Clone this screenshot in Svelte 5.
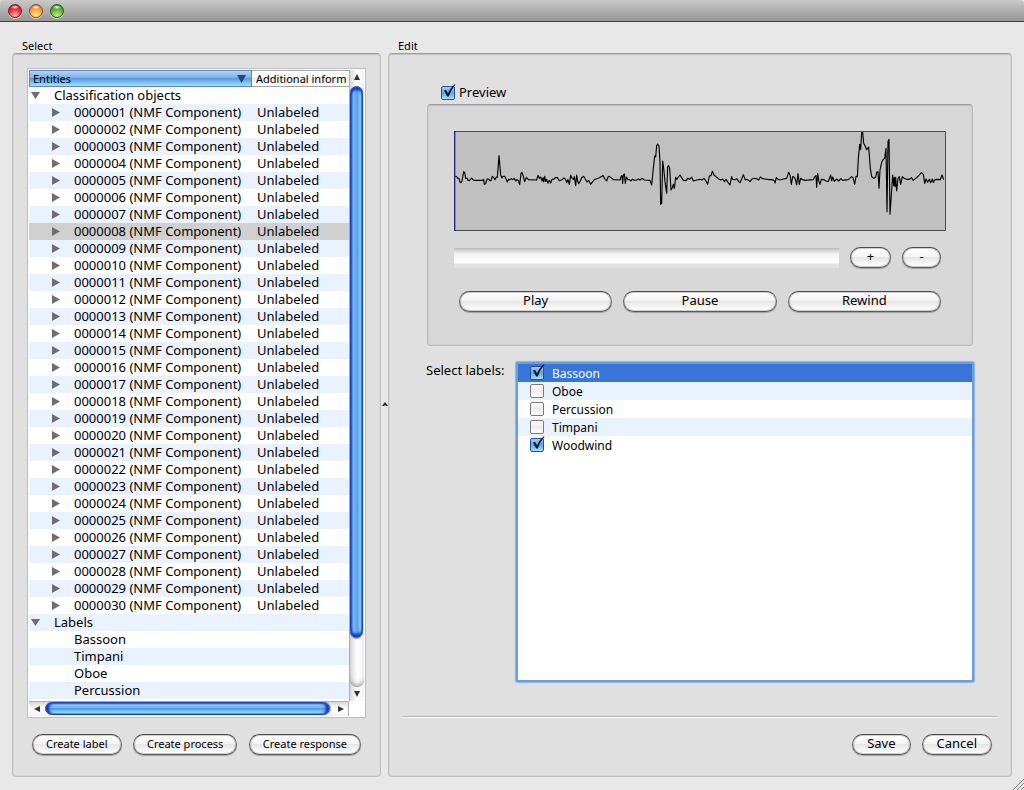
<script>
  const pad = (n) => String(n).padStart(7, '0');
  const rows = [
    { text: 'Classification objects', level: 0, open: true },
    ...Array.from({ length: 30 }, (_, i) => ({
      text: `${pad(i + 1)} (NMF Component)`,
      info: 'Unlabeled',
      level: 1,
      closed: true,
      selected: i === 7
    })),
    { text: 'Labels', level: 0, open: true },
    ...['Bassoon', 'Timpani', 'Oboe', 'Percussion'].map((text) => ({ text, level: 1 }))
  ];

  let preview = $state(true);
  let labels = $state([
    { name: 'Bassoon', on: true },
    { name: 'Oboe', on: false },
    { name: 'Percussion', on: false },
    { name: 'Timpani', on: false },
    { name: 'Woodwind', on: true }
  ]);

  // Waveform samples: each part is [x offset, y offset, "x,y ..."].
  const parts = [
    [-42, -18, '46,154 50,155 53,160 57,160 60,171 63,173 66,168 71,140 74,143 77,160 82,160 84,166 89,166 95,159 99,164 102,166 128,166 131,163 133,178 137,176 141,162 146,162 149,167 153,167 157,154 161,158 165,164 169,156 172,157 177,92 182,150 186,159 189,154 194,154 198,161 202,171 206,163 210,164 214,161 218,164 223,160 227,168 231,164 235,167 239,179 243,145 246,142 250,154 254,170 259,157 265,164 290,165 294,151 298,160 302,156 306,168 309,158 311,171 314,154 317,170 320,163 324,175 328,166 332,174 336,163 341,163 346,158 352,158 358,167 366,164 372,159 377,163 380,173 384,164 388,178 392,150 396,160 400,163 403,155 407,182 410,150 413,168 416,176 421,168 425,158 431,154 437,164 441,171 446,166 452,178 458,170 463,164 470,161 478,158 486,154 489,151 494,161 500,168 504,156 508,154'],
    [438, -18, '33,158 40,164 60,165 63,155 66,152 68,175 70,150 73,147 76,175 79,156 83,163 88,164 93,168 97,163 103,166 110,165 115,162 120,165 127,160 133,165 150,166 155,180 160,130 164,93 167,96 170,62 173,57 177,63 180,110 182,238 185,235 188,108 191,130 195,170 200,205 203,125 206,122 209,130 213,195 217,188 220,178 223,190 227,157 231,163 235,156 240,150 245,158 250,166 258,167 263,160 269,163 275,156 280,168 290,165 300,163 306,165 312,160 318,168 323,178 328,153 333,152 337,139 342,150 348,155 355,161 362,165 368,162 373,170 378,163 384,172 390,180 395,155 398,163 405,164 411,161 416,170 420,173 425,162 430,149 436,165 442,163 450,170 455,163 462,160 470,161 476,165 481,156 488,161 495,162 508,164'],
    [708, -93, '245,239 252,241 255,249 259,233 264,238'],
    [978, -18, '0,165 10,162 20,160 26,142 30,150 34,178 38,155 42,156 46,162 50,180 54,146 58,178 62,160 68,164 75,166 100,164 104,155 108,152 110,187 113,146 117,170 120,178 124,163 132,164 138,168 145,170 152,150 155,168 158,156 163,169 170,162 176,168 183,161 188,166 205,164 215,155 219,158 224,178 228,154 232,155 235,100 239,58 242,74 245,22 248,22 251,55 255,62 260,74 266,66 271,130 275,155 282,160 287,157 290,142 294,140 297,190 300,135 305,112 310,103 314,100 318,70 321,260 324,50 327,43 330,268 333,225 338,150 341,182 343,157 345,185 347,157 350,198 354,160 358,155 362,178 367,155 372,160 380,163 388,163 394,158 400,166 410,158 418,150 424,143 430,148 434,175 438,162 443,172 448,163 452,173 457,162 460,172 465,164 475,163 481,164 486,150 491,164']
  ];
  const wave = parts
    .flatMap(([dx, dy, pts]) =>
      pts.split(' ').map((p) => {
        const [x, y] = p.split(',').map(Number);
        return `${x + dx},${y + dy}`;
      })
    )
    .join(' ');
</script>

{#snippet tick()}
  <svg class="tick" viewBox="0 0 16 16" aria-hidden="true">
    <path d="M3 6.6 5 5.8 7 9.4 C8.6 5.6 10.8 2.6 13.8 0.2 L14.6 0.8 C11.8 3.8 9.4 8 7.8 12.4 L6.2 12.4Z" fill="#10131c" />
  </svg>
{/snippet}

{#snippet arrow(dir)}
  <svg class="arrow" viewBox="0 0 8 8" aria-hidden="true">
    <path
      d={{ up: 'M4 1 7 7H1Z', down: 'M4 7 7 1H1Z', left: 'M1 4 7 1V7Z', right: 'M7 4 1 1V7Z' }[dir]}
      fill="#333"
    />
  </svg>
{/snippet}

<div class="window">
  <header class="titlebar">
    <button class="light red" aria-label="Close"></button>
    <button class="light amber" aria-label="Minimize"></button>
    <button class="light green" aria-label="Zoom"></button>
  </header>

  <main>
    <section class="pane select">
      <h2>Select</h2>
      <div class="group">
        <div class="tree">
          <div class="view">
            <table>
              <colgroup><col class="c1" /><col /></colgroup>
              <thead>
                <tr>
                  <th class="sorted"><span>Entities</span>
                    <svg viewBox="0 0 9 8" aria-hidden="true"><path d="M0 0H9L4.5 8Z" fill="#1f4a73" /></svg>
                  </th>
                  <th class="plain">Additional inform</th>
                </tr>
              </thead>
              <tbody>
                {#each rows as r}
                  <tr class:selected={r.selected}>
                    <td class={`level${r.level}`}>
                      <span class="mark">
                        {#if r.open}
                          <svg viewBox="0 0 9 9" aria-hidden="true"><path d="M0 1H9L4.5 8Z" fill="#6e6e6e" /></svg>
                        {:else if r.closed}
                          <svg viewBox="0 0 9 9" aria-hidden="true"><path d="M1 0V9L9 4.5Z" fill="#6e6e6e" /></svg>
                        {/if}
                      </span>{r.text}
                    </td>
                    <td class="info">{r.info ?? ''}</td>
                  </tr>
                {/each}
              </tbody>
            </table>
          </div>
          <div class="vbar">
            <button aria-label="Scroll up">{@render arrow('up')}</button>
            <div class="vtrack"><div class="vthumb"></div></div>
            <button aria-label="Scroll down">{@render arrow('down')}</button>
          </div>
          <div class="hbar">
            <button aria-label="Scroll left">{@render arrow('left')}</button>
            <div class="htrack"><div class="hthumb"></div></div>
            <button aria-label="Scroll right">{@render arrow('right')}</button>
          </div>
        </div>
        <div class="actions">
          <button class="pill small">Create label</button>
          <button class="pill small">Create process</button>
          <button class="pill small">Create response</button>
        </div>
      </div>
    </section>

    <div class="splitter">
      <svg viewBox="0 0 6 4" aria-hidden="true"><path d="M0 4 3 0 6 4H4L3 3 2 4Z" fill="#222" /></svg>
    </div>

    <section class="pane edit">
      <h2>Edit</h2>
      <div class="group">
        <div class="content">
          <label class="check preview">
            <span class="box"><input type="checkbox" bind:checked={preview} />{#if preview}{@render tick()}{/if}</span>
            Preview
          </label>
          <div class="group inner">
            <svg class="wave" viewBox="0 0 1476 300" preserveAspectRatio="none" role="img" aria-label="Waveform">
              <rect width="1476" height="300" fill="#c0c0c0" />
              <polyline points={wave} fill="none" stroke="#000" stroke-width="3.4" stroke-linejoin="round" />
              <path d="M0 1.5H1474.5V298.5H0" fill="none" stroke="#4c4c4c" stroke-width="3" />
              <path d="M2 0V300" stroke="#22227a" stroke-width="4" />
            </svg>
            <div class="zoomrow">
              <div class="strip"></div>
              <button class="pill plus" aria-label="Zoom in">+</button>
              <button class="pill minus" aria-label="Zoom out">-</button>
            </div>
            <div class="transport">
              <button class="pill">Play</button>
              <button class="pill">Pause</button>
              <button class="pill">Rewind</button>
            </div>
          </div>
          <div class="labelrow">
            <span class="caption" id="labels-caption">Select labels:</span>
            <ul class="list" aria-labelledby="labels-caption">
              {#each labels as l, i}
                <li class:current={i === 0}>
                  <label class="check">
                    <span class="box"><input type="checkbox" bind:checked={l.on} />{#if l.on}{@render tick()}{/if}</span>
                    {l.name}
                  </label>
                </li>
              {/each}
            </ul>
          </div>
        </div>
        <hr />
        <div class="footer">
          <button class="pill">Save</button>
          <button class="pill">Cancel</button>
        </div>
      </div>
    </section>
  </main>
  <svg class="grip" viewBox="0 0 12 12" aria-hidden="true">
    <path d="M1 12 12 1M5 12 12 5M9 12 12 9" stroke="#777" stroke-width="1" />
    <path d="M2 12 12 2M6 12 12 6M10 12 12 10" stroke="#fff" stroke-width=".6" />
  </svg>
</div>

<style>
  :global(body) { margin: 0; background: #e8e8e8; }
  .window {
    position: relative;
    box-sizing: border-box;
    min-height: 100vh;
    display: flex;
    flex-direction: column;
    background: #e8e8e8;
    color: #000;
    font: 13px/17px "Lucida Grande", "Noto Sans", "Open Sans", sans-serif;
  }
  button, input { font: inherit; color: inherit; margin: 0; }
  button { box-sizing: border-box; padding: 0; border: 0; background: none; }

  .titlebar {
    box-sizing: border-box;
    height: 22px;
    display: flex;
    align-items: center;
    gap: 7px;
    padding-left: 8px;
    border-bottom: 1px solid #404040;
    border-radius: 4px 4px 0 0;
    background: linear-gradient(#c9c9c9, #969696);
  }
  .light {
    width: 14px;
    height: 14px;
    border-radius: 50%;
    border: 1px solid;
    box-shadow: 0 1px 0 #d4d4d4;
  }
  .red { border-color: #7d2020; background: radial-gradient(ellipse 4px 2px at 50% 18%, #fff, #fff0), radial-gradient(circle at 50% 90%, #ffb0b0, #e33338 55%, #a80f16); }
  .amber { border-color: #8a4a1c; background: radial-gradient(ellipse 4px 2px at 50% 18%, #fff, #fff0), radial-gradient(circle at 50% 90%, #ffee86, #f4a63c 55%, #b9601a); }
  .green { border-color: #245f1c; background: radial-gradient(ellipse 4px 2px at 50% 18%, #fff, #fff0), radial-gradient(circle at 50% 90%, #c6ec84, #63b03c 55%, #2b7420); }

  main {
    flex: 1;
    display: flex;
    padding: 16px 12px 13px;
  }
  .pane { display: flex; flex-direction: column; }
  .select { width: 369px; }
  .edit { flex: 1; min-width: 0; }
  h2 { margin: 0; padding-left: 10px; font-size: 11px; line-height: 15px; font-weight: 400; }
  .group {
    flex: 1;
    box-sizing: border-box;
    display: flex;
    flex-direction: column;
    border: 1px solid #c0c0c0;
    border-top-color: #9e9e9e;
    border-radius: 4px;
    background: #e0e0e0;
    box-shadow: inset 0 1px 1px #0000001c, inset 0 0 0 1px #00000008;
  }
  .select .group { padding: 14px 14px 21px; }

  .tree {
    flex: 1;
    box-sizing: border-box;
    display: grid;
    grid-template: 1fr 15px / 1fr 15px;
    border: 1px solid #bdbdbd;
    padding: 1px;
    background: #fff;
  }
  .view { overflow: hidden; padding-bottom: 2px; }
  table { width: 100%; table-layout: fixed; border-collapse: separate; border-spacing: 0; }
  .c1 { width: 223px; }
  th, td { box-sizing: border-box; height: 17px; padding: 0; text-align: left; font-weight: 400; white-space: nowrap; overflow: hidden; }
  th { font-size: 11px; line-height: 15px; padding-left: 3px; border-top: 1px solid #a5a5a5; border-bottom: 1px solid #a5a5a5; background: linear-gradient(#fff, #fff 40%, #ececec 45%, #fff); }
  .sorted { border-color: #5c88c4; border-left: 1px solid #5c88c4; border-right: 1px solid #5c88c4; background: linear-gradient(#b5d3f2, #7fb2e8 45%, #569cdf 50%, #a9defc); }
  .sorted svg { float: right; width: 9px; height: 8px; margin: 4px 5px 0 0; }
  .plain { padding-left: 4px; }
  tbody tr:nth-child(even) { background: #ebf2ff; }
  tbody tr.selected { background: #d0d0d0; }
  .level0 { padding-left: 2px; }
  .level1 { padding-left: 22px; }
  .mark { display: inline-block; width: 23px; height: 9px; }
  .mark svg { display: block; width: 9px; height: 9px; }
  .info { padding-left: 5px; }

  .vbar, .hbar { display: flex; }
  .vbar { flex-direction: column; border-left: 1px solid #b0b0b0; background: linear-gradient(90deg, #d8d8d8, #fff 50%, #f2f2f2); }
  .hbar { border-top: 1px solid #b0b0b0; border-right: 1px solid #b0b0b0; background: linear-gradient(#d8d8d8, #fff 50%, #f2f2f2); }
  .vbar button, .hbar button { width: 14px; height: 14px; display: grid; place-items: center; }
  .hbar button { width: 15px; }
  .arrow { width: 8px; height: 8px; }
  .vtrack { flex: 1; padding: 2px 0 0; border-radius: 0 0 7px 7px; border-bottom: 1px solid #999; box-shadow: inset 0 -4px 4px -2px #0004; }
  .vthumb {
    box-sizing: border-box;
    width: 13px;
    height: 92%;
    border: 1px solid #1a45b4;
    border-radius: 7px;
    background: linear-gradient(90deg, #2458d4, #7fb4f4 20%, #62a8f6 50%, #4a98f2 56%, #8fd6ff 85%, #3a80e6);
    box-shadow: inset 0 4px 3px -1px #0c36b0, inset 0 -4px 3px -1px #0c36b0, 0 1px 1px #0006;
  }
  .htrack { flex: 1; padding: 0 1px; border-radius: 7px; }
  .hthumb {
    box-sizing: border-box;
    height: 13px;
    border: 1px solid #1a45b4;
    border-radius: 7px;
    margin-right: 2px;
    background: linear-gradient(#2458d4, #8dbff6 15%, #74b2f4 45%, #4596f0 52%, #a0e6ff 90%, #4a90ea);
    box-shadow: inset 4px 0 3px -1px #0c36b0, inset -4px 0 3px -1px #0c36b0, 1px 0 1px #0006;
  }

  .pill {
    height: 21px;
    padding: 0 16px 2px;
    border: 1px solid;
    border-color: #4a4a4a #666 #5a5a5a;
    border-radius: 11px;
    background: linear-gradient(#fff, #f4f4f4 45%, #e6e6e6 50%, #fff);
    line-height: 17px;
    white-space: nowrap;
    box-shadow: inset 0 0 0 1px #00000030, 0 1px 1px #0004;
  }
  .small { font-size: 11px; }
  .actions { display: flex; justify-content: space-between; padding: 16px 5px 0; }
  .actions .small { padding: 0 13px 2px; }

  .splitter { width: 7px; display: grid; place-items: center; padding-bottom: 7px; }
  .splitter svg { width: 6px; height: 4px; }

  .edit .group { padding: 29px 14px 21px; }
  .content { flex: 1; display: flex; flex-direction: column; padding: 0 24px 34px; }
  .check { display: flex; align-items: center; gap: 4px; }
  .preview { padding-left: 14px; height: 19px; margin-bottom: 2px; }
  .box { position: relative; width: 14px; height: 14px; }
  .box input {
    appearance: none;
    display: block;
    box-sizing: border-box;
    width: 14px;
    height: 14px;
    border: 1px solid #7a7a7a;
    border-radius: 2px;
    background: linear-gradient(#fff, #ececec 50%, #fff);
  }
  .box input:checked { border-color: #23509c; background: linear-gradient(#a8ccf4, #5aa4ec 50%, #a8e4ff); }
  .tick { position: absolute; left: 0; top: -2px; width: 16px; height: 16px; pointer-events: none; }

  .edit .inner {
    flex: none;
    background: #d8d8d8;
    border-color: #9e9e9e #bcbcbc #bcbcbc;
    padding: 26px 26px 33px;
  }
  .wave { display: block; width: 100%; height: 100px; }
  .zoomrow { display: flex; align-items: center; padding: 16px 5px 0 0; }
  .strip { flex: 1; height: 20px; margin-right: 11px; background: linear-gradient(#bcbcbc, #f4f4f4 30%, #fff 75%, #e2e2e2 80%); }
  .plus { width: 41px; margin-right: 11px; padding: 0 0 2px; }
  .minus { width: 39px; padding: 0 0 2px; }
  .transport { display: flex; gap: 11px; padding: 23px 5px 0; }
  .transport .pill { flex: 1; }

  .labelrow { flex: 1; display: flex; padding-top: 16px; }
  .caption { width: 90px; flex: none; margin-left: -1px; }
  .list {
    flex: 1;
    margin: 0 -1px 0 0;
    padding: 0;
    list-style: none;
    font-size: 12px;
    background: #fff;
    border: 2px solid #6a9fdb;
    border-radius: 2px;
    box-shadow: 0 0 1px 1px #8bb3e2;
  }
  .list li { height: 18px; display: flex; align-items: center; padding-left: 12px; }
  .list li:nth-child(even) { background: #ebf2ff; }
  .list li.current { background: #3875d7; color: #fff; }
  .list .check { gap: 8px; }

  hr { width: 100%; box-sizing: border-box; margin: 0; height: 2px; border: 0; border-top: 1px solid #b4b4b4; background: #fff; }
  .footer { display: flex; justify-content: flex-end; gap: 11px; padding: 16px 5px 0 0; }
  .footer .pill { padding: 0 14px 2px; }
  .grip { position: absolute; right: 0; bottom: 0; width: 12px; height: 12px; }
</style>
